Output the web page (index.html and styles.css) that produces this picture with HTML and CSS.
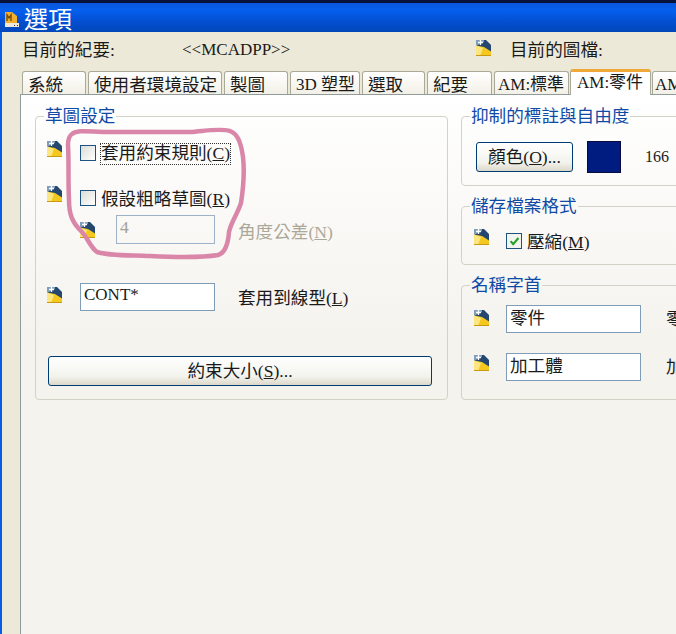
FILE: index.html
```html
<!DOCTYPE html>
<html lang="zh-Hant">
<head>
<meta charset="utf-8">
<title>選項</title>
<link rel="stylesheet" href="styles.css">
</head>
<body>
<svg class="defs" width="0" height="0" aria-hidden="true">
  <symbol id="prop" viewBox="0 0 16 16">
    <path d="M0 0h10l5 5v9H0z" fill="#24466f"/>
    <path d="M0 0h8v2L0 6z" fill="#7f9dbd"/>
    <path d="M0 5.500 8 7l7 4.500V16H0z" fill="#f5c81f"/>
    <path d="M0 16V5.500L7 8 4 16z" fill="#fde681"/>
    <path d="M15 15.500H0" stroke="#c99a10"/>
    <path d="M4.500 0v5M2 2.500h5" stroke="#fff" stroke-width="1.300"/>
  </symbol>
</svg>
<div class="window">
  <header class="titlebar">
    <svg class="app-icon" viewBox="0 0 14 15" width="14" height="15" aria-hidden="true">
      <path d="M0 0h7l5 4v7H0z" fill="#f2b02e"/>
      <path d="M2 9V3l2 3 2-3v6" fill="none" stroke="#7a4a08" stroke-width="1.400"/>
      <path d="M0 11h14v4H0z" fill="#eee9dc"/>
      <path d="M9 13h1v1H9zM12 13h1v1h-1z" fill="#333"/>
    </svg>
    <h1 class="title">選項</h1>
  </header>
  <main class="dialog">
    <div class="info">
      <span>目前的紀要:</span>
      <span class="latin">&lt;&lt;MCADPP&gt;&gt;</span>
      <svg class="ico"><use href="#prop"/></svg>
      <span>目前的圖檔:</span>
    </div>
    <nav class="tabs">
      <span class="tab w64">系統</span>
      <span class="tab w134">使用者環境設定</span>
      <span class="tab w64">製圖</span>
      <span class="tab w70">3D 塑型</span>
      <span class="tab w63">選取</span>
      <span class="tab w65">紀要</span>
      <span class="tab w75">AM:標準</span>
      <span class="tab active">AM:零件</span>
      <span class="tab w40">AM:</span>
    </nav>
    <section class="panel">
      <fieldset class="group left">
        <legend>草圖設定</legend>
        <div class="row r-first">
          <svg class="ico"><use href="#prop"/></svg>
          <span class="check"></span>
          <span class="focus">套用約束規則(<u>C</u>)</span>
        </div>
        <div class="row r-second">
          <svg class="ico"><use href="#prop"/></svg>
          <span class="check"></span>
          <span class="check-label">假設粗略草圖(<u>R</u>)</span>
        </div>
        <div class="row r-sub">
          <svg class="ico"><use href="#prop"/></svg>
          <input class="field narrow" value="4" disabled>
          <span class="muted">角度公差(<u>N</u>)</span>
        </div>
        <div class="row r-line">
          <svg class="ico"><use href="#prop"/></svg>
          <input class="field wide" value="CONT*">
          <span class="side">套用到線型(<u>L</u>)</span>
        </div>
        <button class="btn long" type="button">約束大小(<u>S</u>)...</button>
      </fieldset>
      <div class="right">
        <fieldset class="group g-color">
          <legend>抑制的標註與自由度</legend>
          <div class="color-row">
            <button class="btn short" type="button">顏色(<u>O</u>)...</button>
            <span class="swatch"></span>
            <span class="num">166</span>
          </div>
        </fieldset>
        <fieldset class="group g-save">
          <legend>儲存檔案格式</legend>
          <div class="row-r r-save">
            <svg class="ico"><use href="#prop"/></svg>
            <span class="check on">
              <svg viewBox="0 0 15 15" width="13" height="13" aria-hidden="true"><path d="M3 7l3 3.500 6-7" fill="none" stroke="#21a121" stroke-width="2.400"/></svg>
            </span>
            <span class="check-label">壓縮(<u>M</u>)</span>
          </div>
        </fieldset>
        <fieldset class="group g-prefix">
          <legend>名稱字首</legend>
          <div class="row-r r-p1">
            <svg class="ico"><use href="#prop"/></svg>
            <input class="field prefix" value="零件">
            <span class="cut">零件</span>
          </div>
          <div class="row-r r-p2">
            <svg class="ico"><use href="#prop"/></svg>
            <input class="field prefix" value="加工體">
            <span class="cut">加工體</span>
          </div>
        </fieldset>
      </div>
    </section>
  </main>
  <svg class="scribble" viewBox="0 0 676 634" width="676" height="634" aria-hidden="true">
    <path d="M72 134C78 129 90 132 110 132L190 132C205 131 220 128 230 131C238 134 241 143 243 157C245 175 243 190 241 203C237 215 231 222 229 232C228 245 225 253 218 255C200 258 170 257 150 256C130 255 110 256 97 252C90 247 88 238 81 231C72 222 69 214 69 200C68 180 69 160 68 145C68 139 69 136 72 134Z" fill="none" stroke="#d986a8" stroke-width="4.500" stroke-linejoin="round"/>
  </svg>
</div>
</body>
</html>
```
FILE: styles.css
```css
* { box-sizing: border-box; }
html, body { margin: 0; padding: 0; }
body {
  width: 676px;
  height: 634px;
  overflow: hidden;
  font-family: "Liberation Serif", "Noto Sans CJK TC", serif;
  font-size: 17.6px;
  line-height: 20px;
  color: #1a1a1a;
}
.defs { position: absolute; }
.window {
  position: relative;
  width: 676px;
  height: 634px;
  overflow: hidden;
  display: flex;
  flex-direction: column;
  background: #0a5ce0;
}
.titlebar {
  flex: none;
  height: 32px;
  display: flex;
  align-items: center;
  padding: 4px 0 0 5px;
  gap: 5px;
  border-top: 3px solid #06123a;
  background: linear-gradient(#0a55d8 0, #0560ee 25%, #0350d4 60%, #0246b8 100%);
}
.app-icon { flex: none; }
.title {
  margin: 0;
  font-size: 24px;
  line-height: 28px;
  font-weight: 400;
  color: #fff;
}
.dialog {
  flex: 1;
  margin-left: 2px;
  padding-left: 18px;
  display: flex;
  flex-direction: column;
  background: #ece9d8;
}
.info {
  flex: none;
  height: 37px;
  padding: 8px 0 0 2px;
  display: grid;
  grid-template-columns: 160px 294px 34px 1fr;
  align-items: start;
}
.latin { font-size: 17px; }
.ico { flex: none; width: 16px; height: 16px; display: block; }
.tabs {
  flex: none;
  height: 25px;
  margin-right: -40px;
  padding-left: 2px;
  display: flex;
  align-items: flex-end;
  gap: 2px;
}
.tab {
  flex: none;
  height: 23px;
  padding: 3px 0 0 5px;
  white-space: nowrap;
  border: 1px solid #a9a99a;
  border-bottom: 0;
  border-radius: 3px 3px 0 0;
  background: linear-gradient(#fff, #f2f0e6);
}
.w64 { width: 64px; }
.w134 { width: 134px; }
.w70 { width: 70px; font-size: 17px; }
.w63 { width: 63px; }
.w65 { width: 65px; }
.w75 { width: 75px; padding-left: 3px; font-size: 17px; }
.w40 { width: 40px; padding-left: 2px; font-size: 17px; }
.tab.active {
  position: relative;
  z-index: 1;
  width: 81px;
  height: 26px;
  margin: 0 -1px -1px -1px;
  padding: 1px 0 0 6px;
  font-size: 17px;
  background: #fff;
  border-top: 3px solid #f0a838;
  border-color: #f0a838 #a9a99a #fff;
}
.panel {
  flex: 1;
  min-height: 0;
  padding: 11px 0 0 14px;
  display: grid;
  grid-template-columns: 413px 240px;
  column-gap: 13px;
  align-items: start;
  border-top: 1px solid #919b9c;
  border-left: 1px solid #919b9c;
  background: linear-gradient(#fff 0, #f5f3ee 45%, #f5f3ee 100%);
}
.group {
  margin: 0;
  padding: 0;
  min-width: 0;
  border: 1px solid #d3d2c6;
  border-radius: 4px;
}
.group legend {
  margin-left: 8px;
  padding: 0 1px;
  color: #0f4aa6;
}
.left { height: 294px; }
.right { display: flex; flex-direction: column; gap: 10px; }
.g-color { height: 80px; }
.g-save { height: 69px; }
.g-prefix { height: 125px; }
.row { display: flex; padding-left: 11px; }
.row-r { display: flex; padding-left: 12px; }
.r-first { margin-top: 15px; height: 22px; }
.r-second { margin-top: 23px; height: 22px; }
.check {
  flex: none;
  width: 16px;
  height: 16px;
  margin: 4px 0 0 17px;
  display: flex;
  align-items: center;
  justify-content: center;
  border: 1px solid #1c5180;
  background: linear-gradient(135deg, #dcdcd7, #fff);
}
.check.on { background: #f4f4ef; }
.check-label { margin: 3px 0 0 5px; white-space: nowrap; }
.focus {
  margin: 2px 0 0 4px;
  padding: 0 1px;
  height: 22px;
  line-height: 20px;
  white-space: nowrap;
  outline: 1px dotted #333;
  outline-offset: -1px;
}
.r-sub {
  margin-top: 7px;
  height: 29px;
  padding-left: 44px;
  align-items: center;
}
.field {
  flex: none;
  height: 29px;
  padding: 0 3px 4px;
  font: inherit;
  color: #1a1a1a;
  background: #fff;
  border: 1px solid #7f9db9;
  border-radius: 0;
  outline: none;
}
.field:disabled { color: #a3a195; background: transparent; border-color: #9db2c6; }
.narrow { width: 99px; margin-left: 20px; }
.muted { margin: 4px 0 0 23px; color: #aca899; white-space: nowrap; }
.r-line { margin-top: 39px; height: 28px; align-items: flex-start; }
.r-line .ico { margin-top: 4px; }
.wide { width: 135px; height: 28px; margin-left: 17px; font-size: 17px; }
.side { margin: 5px 0 0 23px; white-space: nowrap; }
.btn {
  font: inherit;
  color: #1a1a1a;
  padding: 0;
  border: 1px solid #003c74;
  border-radius: 3px;
  background: linear-gradient(#fff, #f3f3ed 70%, #dcd8ca);
}
.long {
  display: block;
  width: 384px;
  height: 30px;
  margin: 45px 0 0 12px;
}
.color-row { display: flex; align-items: center; padding: 15px 0 0 14px; }
.short { flex: none; width: 97px; height: 30px; }
.swatch { flex: none; width: 34px; height: 32px; margin-left: 14px; background: #001c80; border: 1px solid #0a0a3c; }
.num { margin-left: 24px; font-size: 16px; }
.r-save { margin-top: 13px; }
.r-save .check { margin: 4px 0 0 16px; }
.r-p1 { margin-top: 10px; height: 28px; }
.r-p2 { margin-top: 20px; height: 28px; }
.r-p1 .ico { margin-top: 5px; }
.r-p2 .ico { margin-top: 2px; }
.prefix { width: 135px; height: 28px; margin-left: 16px; padding-bottom: 6px; }
.cut { margin: 4px 0 0 25px; white-space: nowrap; }
.scribble { position: absolute; left: 0; top: 0; pointer-events: none; }
```
